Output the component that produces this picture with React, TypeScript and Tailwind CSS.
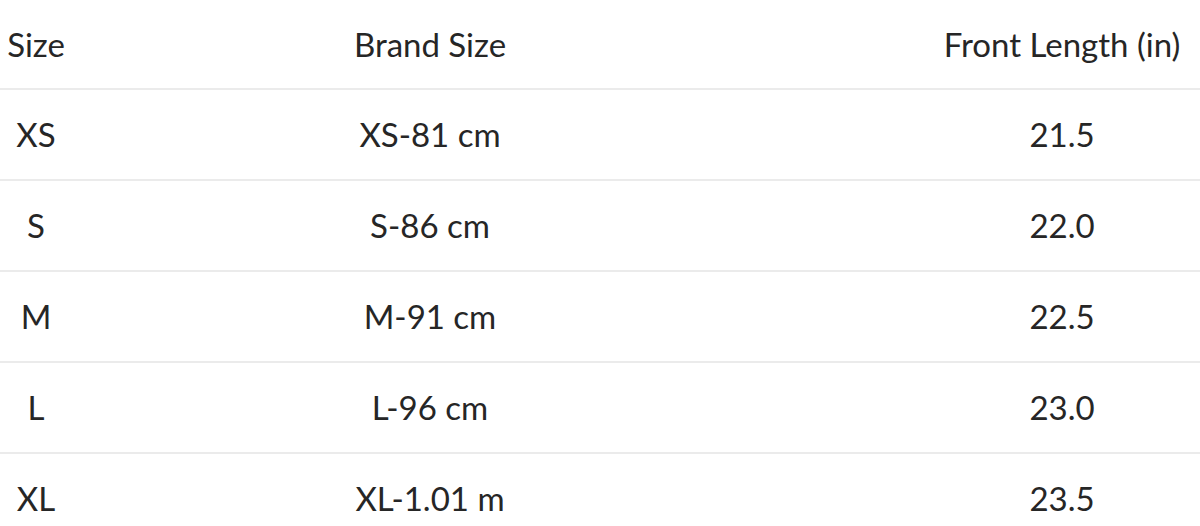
const rows = [
  { size: "XS", brand: "XS-81 cm", front: "21.5" },
  { size: "S", brand: "S-86 cm", front: "22.0" },
  { size: "M", brand: "M-91 cm", front: "22.5" },
  { size: "L", brand: "L-96 cm", front: "23.0" },
  { size: "XL", brand: "XL-1.01 m", front: "23.5" },
];

const App = () => {
  return (
    <div className="h-[526px] w-[1200px] overflow-hidden bg-white font-['Lato',sans-serif] text-[33px] leading-none text-[#262626]">
      <div className="grid h-[88px] grid-cols-[72px_716px_548px] items-center">
        <div className="text-center">Size</div>
        <div className="text-center">Brand Size</div>
        <div className="text-center">Front Length (in)</div>
      </div>
      {rows.map((row) => (
        <div
          key={row.size}
          className="grid h-[91px] grid-cols-[72px_716px_548px] items-center border-t-2 border-[#ebebeb]"
        >
          <div className="text-center">{row.size}</div>
          <div className="text-center">{row.brand}</div>
          <div className="text-center">{row.front}</div>
        </div>
      ))}
    </div>
  );
};

export default App;
